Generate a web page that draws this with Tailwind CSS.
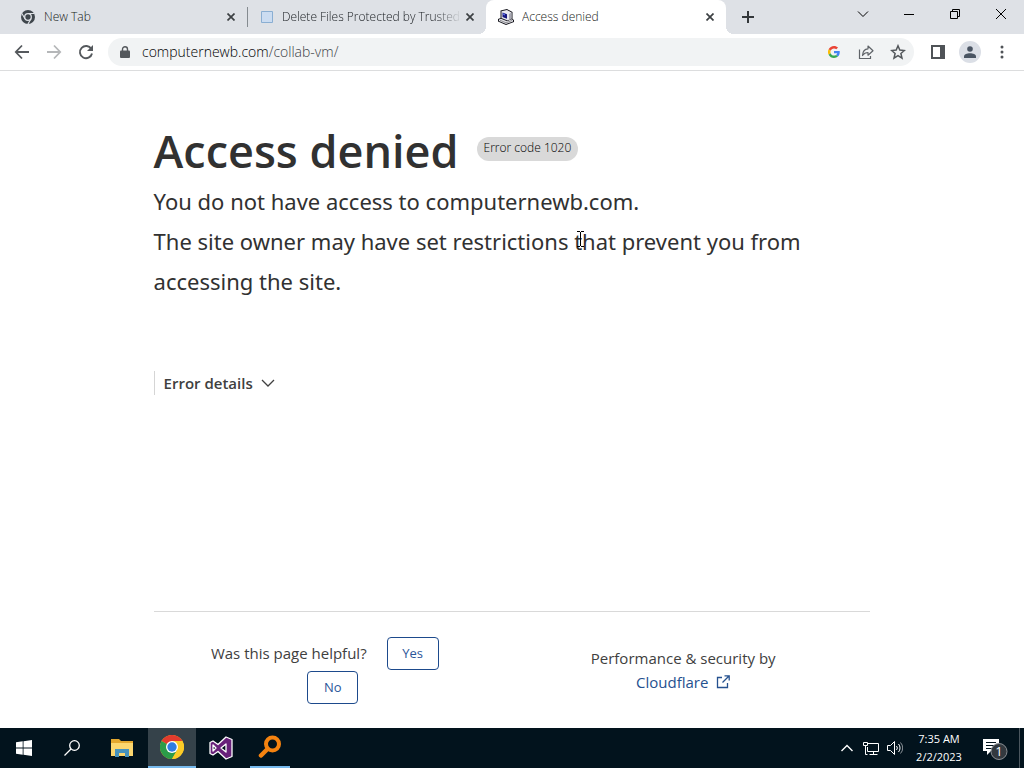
<!DOCTYPE html>
<html lang="en">
<head>
<meta charset="utf-8">
<meta name="viewport" content="width=device-width, initial-scale=1">
<title>Access denied</title>
<script src="https://cdn.jsdelivr.net/npm/@tailwindcss/browser@4"></script>
</head>
<body class="relative flex h-screen flex-col overflow-hidden bg-white font-['Open_Sans','Noto_Sans',sans-serif] text-[#313131]">

<!-- Tab strip -->
<div class="flex h-[34px] shrink-0 bg-[#dee1e6] pl-2 text-xs font-light text-[#181c20]">
  <div class="flex min-w-0 max-w-60 flex-1 items-center gap-2 pl-3">
    <svg class="size-4 shrink-0" viewBox="0 0 16 16"><circle cx="8" cy="8" r="7" fill="#3f464c"/><circle cx="8" cy="8" r="3.300" fill="#3f464c" stroke="#dee1e6" stroke-width="1.300"/><path d="M8 4.500h6.200M5 9.800L1.900 4.400M11 9.800l-3.100 5.300" stroke="#dee1e6" stroke-width="1.100"/></svg>
    <span class="flex-1 truncate">New Tab</span>
    <button class="grid size-4 shrink-0 place-items-center" aria-label="Close New Tab"><svg class="size-2" viewBox="0 0 8 8" stroke="#3c4043" stroke-width="1.700"><path d="M.5.5l7 7M7.500.5l-7 7"/></svg></button>
    <span class="h-5 w-px bg-[#858b90]"></span>
  </div>
  <div class="flex min-w-0 max-w-[238px] flex-1 items-center gap-2 pl-3 pr-2">
    <svg class="size-[14px] shrink-0" viewBox="0 0 14 14"><path d="M1.500 1.500h11v11h-11z" fill="#cbdcf1" stroke="#8aaed2"/></svg>
    <span class="flex-1 overflow-hidden whitespace-nowrap mask-r-from-85% mask-r-to-100%">Delete Files Protected by Trusted</span>
    <button class="-ml-2 grid size-4 shrink-0 place-items-center" aria-label="Close Delete Files tab"><svg class="size-2" viewBox="0 0 8 8" stroke="#3c4043" stroke-width="1.700"><path d="M.5.5l7 7M7.500.5l-7 7"/></svg></button>
  </div>
  <div class="relative flex min-w-0 max-w-60 flex-1 items-center gap-2 rounded-t-lg bg-white pl-3 pr-2">
    <span class="absolute bottom-0 -left-2 size-2 bg-[radial-gradient(circle_at_0_0,transparent_8px,white_8px)]"></span>
    <span class="absolute -right-2 bottom-0 size-2 bg-[radial-gradient(circle_at_100%_0,transparent_8px,white_8px)]"></span>
    <svg class="size-4 shrink-0" viewBox="0 0 16 16"><path d="M2.500 1.500L9 0l5.500 3v7L16 11v2l-8 3-8-3.500V10l2.500-1z" fill="#15151c"/><path d="M3.500 2.300L9 1l4.500 2.500v6L9.500 11.500l-6-2.500z" fill="#e8e8ee"/><path d="M4.500 3.500l4.500 1.700v4.600l-4.500-1.800z" fill="#15157c"/><path d="M5 4.200l2 .8v1.500l-2-.8z" fill="#5a6be8"/><path d="M11 5l2.500-1.500v6l-2.500 1.500z" fill="#a8a8b2"/><path d="M1 10.500l2-.8 6 2.600 4.500-2 1.500.9v1.300L8 15l-7-3z" fill="#e4e4ea"/><path d="M2 11.200l6 2.600 6-2.300" stroke="#555" stroke-width=".6" fill="none"/></svg>
    <span class="flex-1 truncate">Access denied</span>
    <button class="grid size-4 shrink-0 place-items-center" aria-label="Close Access denied"><svg class="size-2" viewBox="0 0 8 8" stroke="#3c4043" stroke-width="1.700"><path d="M.5.5l7 7M7.500.5l-7 7"/></svg></button>
  </div>
  <button class="grid w-11 place-items-center" aria-label="New tab"><svg class="size-3" viewBox="0 0 12 12" stroke="#33373a" stroke-width="2"><path d="M6 0v12M0 6h12"/></svg></button>
  <div class="ml-auto flex h-7 text-black">
    <button class="grid w-[46px] place-items-center" aria-label="Search tabs"><svg class="size-3" viewBox="0 0 12 12" fill="none" stroke="currentColor"><path d="M1 3.500l5 5 5-5"/></svg></button>
    <button class="grid w-[46px] place-items-center" aria-label="Minimize"><svg class="size-3" viewBox="0 0 12 12" stroke="currentColor"><path d="M1 6.500h10"/></svg></button>
    <button class="grid w-[46px] place-items-center" aria-label="Restore"><svg class="size-3" viewBox="0 0 12 12" fill="none" stroke="currentColor"><path d="M1.500 3.500h7v7h-7zM3.500 3.500v-2h7v7h-2"/></svg></button>
    <button class="grid w-[46px] place-items-center" aria-label="Close window"><svg class="size-3" viewBox="0 0 12 12" stroke="currentColor"><path d="M1 1l10 10M11 1L1 11"/></svg></button>
  </div>
</div>

<!-- Toolbar -->
<div class="flex h-[37px] shrink-0 items-center border-b border-[#dcddde] bg-white px-3">
  <div class="flex w-24 gap-3 text-[#55595d]">
    <button class="grid size-5 place-items-center" aria-label="Back"><svg class="size-4" viewBox="0 0 16 16" fill="none" stroke="currentColor" stroke-width="1.800"><path d="M15 8H2M8 1.500L1.800 8 8 14.500"/></svg></button>
    <button class="grid size-5 place-items-center text-[#b5b7b9]" aria-label="Forward"><svg class="size-4" viewBox="0 0 16 16" fill="none" stroke="currentColor" stroke-width="1.800"><path d="M1 8h13M8 1.500L14.200 8 8 14.500"/></svg></button>
    <button class="grid size-5 place-items-center" aria-label="Reload"><svg class="size-4" viewBox="0 0 16 16"><path d="M13.300 5A6.100 6.100 0 1 0 14 9.500" fill="none" stroke="currentColor" stroke-width="1.900"/><path d="M15 1v6H9z" fill="currentColor"/></svg></button>
  </div>
  <div class="flex h-7 flex-1 items-center rounded-full bg-[#f1f3f4] pl-3 pr-2">
    <svg class="mr-3 h-3 w-[10px] shrink-0" viewBox="0 0 10 12"><rect x="0" y="4.500" width="10" height="7.500" rx="1" fill="#54585c"/><path d="M2.500 5V3.200a2.500 2.500 0 0 1 5 0V5" fill="none" stroke="#54585c" stroke-width="1.400"/></svg>
    <div class="flex-1 text-sm font-light text-[#3b4045]" role="textbox" aria-label="Address"><span class="text-black">computernewb.com</span>/collab-vm/</div>
    <div class="flex gap-4">
      <button class="grid size-4 place-items-center" aria-label="Google"><svg class="size-3" viewBox="0 0 48 48"><path fill="#EA4335" d="M24 9.500c3.540 0 6.710 1.220 9.210 3.600l6.850-6.850C35.900 2.380 30.470 0 24 0 14.620 0 6.510 5.380 2.560 13.220l7.980 6.190C12.430 13.720 17.740 9.500 24 9.500z"/><path fill="#4285F4" d="M46.980 24.550c0-1.570-.15-3.090-.38-4.550H24v9.020h12.940c-.58 2.960-2.260 5.480-4.780 7.180l7.730 6c4.510-4.180 7.090-10.360 7.090-17.650z"/><path fill="#FBBC05" d="M10.530 28.590A14.500 14.500 0 0 1 10.530 19.410l-7.980-6.190A24 24 0 0 0 2.560 34.780z"/><path fill="#34A853" d="M24 48c6.480 0 11.930-2.130 15.890-5.810l-7.730-6c-2.150 1.450-4.920 2.300-8.160 2.300-6.260 0-11.570-4.220-13.470-9.910l-7.980 6.190C6.510 42.620 14.620 48 24 48z"/></svg></button>
      <button class="grid size-4 place-items-center" aria-label="Share"><svg class="size-4" viewBox="0 0 16 16" fill="none" stroke="#5f6368" stroke-width="1.200"><path d="M1.500 5.500v9h11v-2.500"/><path d="M4.500 11.500c.2-4.300 2-6.500 5.500-6.700V2l5 4.700-5 4.500V8.500c-2.500 0-4 .8-5.500 3z" stroke-linejoin="round"/></svg></button>
      <button class="grid size-4 place-items-center" aria-label="Bookmark"><svg class="size-4" viewBox="0 0 16 16" fill="none" stroke="#53575b" stroke-width="1.500"><path d="M8 1.800l1.800 4.300 4.600.4-3.500 3 1.100 4.600L8 11.700l-4 2.400 1.100-4.600-3.500-3 4.600-.4z"/></svg></button>
    </div>
  </div>
  <div class="ml-[14px] flex items-center gap-[11px]">
    <button class="grid size-5 place-items-center" aria-label="Side panel"><svg class="size-[14px]" viewBox="0 0 14 14"><path d="M1 1h12v12H1z" fill="none" stroke="#4f5357" stroke-width="2"/><path d="M9 1h4v12H9z" fill="#4f5357"/></svg></button>
    <button class="grid size-[22px] place-items-center rounded-full bg-[#dbdfe6]" aria-label="Profile"><svg class="size-3" viewBox="0 0 12 12" fill="#4a5563"><circle cx="6" cy="3" r="2.800"/><path d="M0 12v-1.500C0 8.500 3 7.300 6 7.300s6 1.200 6 3.200V12z"/></svg></button>
    <button class="grid size-5 place-items-center" aria-label="Menu"><svg class="size-[14px]" viewBox="0 0 14 14" fill="#4f5357"><circle cx="7" cy="2" r="1.500"/><circle cx="7" cy="7" r="1.500"/><circle cx="7" cy="12" r="1.500"/></svg></button>
  </div>
</div>

<!-- Page -->
<main class="mx-auto flex min-h-0 w-[70%] flex-1 flex-col pt-[50px]">
  <div class="flex items-center gap-[18px]">
    <h1 class="text-[45px] leading-[60px] font-semibold">Access denied</h1>
    <span class="mb-1 h-6 rounded-full bg-[#d9d9d9] px-[7px] text-xs leading-[22px] font-light text-black">Error code 1020</span>
  </div>
  <div class="font-['Noto_Sans','Open_Sans',sans-serif] text-[22px] leading-10">
    <p>You do not have access to computernewb.com.</p>
    <p>The site owner may have set restrictions that prevent you from accessing the site.</p>
  </div>
  <button class="mt-[70px] flex h-6 items-center gap-[7px] self-start border-l border-[#d5d5d5] pl-[9px] text-[15px] leading-6 font-semibold text-[#404040]">Error details
    <svg class="h-4 w-4" viewBox="0 0 16 16" fill="none" stroke="#404040" stroke-width="1.300"><path d="M2 5l6 6 6-6"/></svg>
  </button>
  <footer class="mt-auto flex border-t border-[#d9d9d9] pt-[25px] text-[15px] text-[#404040]">
    <div class="flex h-[91px] w-1/2 flex-wrap content-start items-center justify-center gap-y-px px-4">
      <span class="mr-5">Was this page helpful?</span>
      <button class="mr-4 h-[33px] w-[52px] rounded border border-[#1d4a8c] text-[13px] text-[#2c5699]">Yes</button>
      <div class="flex w-full justify-center"><button class="h-[33px] w-[51px] rounded border border-[#1d4a8c] text-[13px] text-[#2c5699]">No</button></div>
    </div>
    <div class="w-1/2 pt-[9px] pr-4 text-center leading-6">Performance &amp; security by<br>
      <a href="#" class="inline-flex items-center gap-2 text-[#25518f]">Cloudflare <svg class="size-[14px]" viewBox="0 0 14 14" fill="none" stroke="currentColor" stroke-width="1.300"><path d="M6 2.500H1.500v10h10V8M8.500.800h4.700v4.700M13 1L6.500 7.500"/></svg></a>
    </div>
  </footer>
</main>

<!-- Taskbar -->
<div class="flex h-10 shrink-0 bg-[#02131d] text-white">
  <button class="grid w-12 place-items-center" aria-label="Start"><svg class="size-4" viewBox="0 0 16 16" fill="#fff"><path d="M0 2.300l6.700-1v6.300H0zM7.500 1.200L16 0v7.600H7.500zM0 8.400h6.700v6.300l-6.700-1zM7.500 8.400H16V16l-8.500-1.200z"/></svg></button>
  <button class="grid w-12 place-items-center" aria-label="Search"><svg class="size-4" viewBox="0 0 16 16" fill="none" stroke="#fff" stroke-width="1.300"><circle cx="10.500" cy="5.500" r="4.800"/><path d="M7 9l-6.500 6.500"/></svg></button>
  <button class="grid w-[52px] place-items-center" aria-label="File Explorer"><svg class="h-[18px] w-[22px]" viewBox="0 0 22 18"><path d="M0 0h8l2 2h12v15H0z" fill="#e3a72e"/><path d="M0 4h22v13H0z" fill="#fbd66f"/><path d="M4 18v-8h14v8h-4v-4H8v4z" fill="#4692bd"/></svg></button>
  <button class="grid w-12 place-items-center border-b-2 border-[#76b9ed] bg-[#35424a]" aria-label="Chrome"><svg class="size-6" viewBox="0 0 24 24"><circle cx="12" cy="12" r="12" fill="#f9c51c"/><path d="M12 12L1.600 6a12 12 0 0 1 20.800 0z" fill="#e23b2e"/><path d="M1.600 6A12 12 0 0 0 12 24l5.200-9L12 12z" fill="#2b9c49"/><path d="M12 6h10.400A12 12 0 0 1 12 24l5.200-9z" fill="#fccb27"/><circle cx="12" cy="12" r="6" fill="#fff"/><circle cx="12" cy="12" r="4.700" fill="#2f7de1"/></svg></button>
  <button class="grid w-[50px] place-items-center" aria-label="Visual Studio"><svg class="size-6" viewBox="0 0 24 24"><path fill-rule="evenodd" d="M17 1l6 2.500v17L17 23l-8-7.500L4 19l-3-1.500v-11L4 5l5 3.500zM17 8l-5 4 5 4zM4 9v6l3-3z" fill="#68217a" stroke="#fff" stroke-width="1.300" stroke-linejoin="round"/></svg></button>
  <button class="ml-1 grid w-10 place-items-center border-b-2 border-[#76b9ed]" aria-label="Everything search"><svg class="size-6" viewBox="0 0 24 24" fill="none" stroke="#f58310"><circle cx="14.500" cy="9" r="6.500" stroke-width="4"/><path d="M9.500 14L3 20.500" stroke-width="4.500" stroke-linecap="round"/></svg></button>
  <div class="ml-auto flex items-center">
    <button class="grid size-6 place-items-center" aria-label="Show hidden icons"><svg class="size-3" viewBox="0 0 12 12" fill="none" stroke="#fff" stroke-width="1.400"><path d="M.5 9L6 3.500 11.500 9"/></svg></button>
    <button class="grid size-6 place-items-center" aria-label="Network"><svg class="size-4" viewBox="0 0 16 16" fill="none" stroke="#fff"><path d="M5 3.500h10.500v8H4.500V7M10.500 11.500v3M6.500 14.500h8M.5 2.500h4v3h-4zM2.500 6v8.500h2"/></svg></button>
    <button class="grid size-6 place-items-center" aria-label="Volume"><svg class="size-4" viewBox="0 0 16 16" fill="none" stroke="#fff"><path d="M.5 5.500h3l4-4v13l-4-4h-3zM9.500 6a3 3 0 0 1 0 4M11.500 4a6 6 0 0 1 0 8"/><path d="M13.500 2.500a8 8 0 0 1 0 11" stroke="#8b9298"/></svg></button>
    <div class="w-16 text-center text-[11px] leading-[18px]">7:35 AM<br>2/2/2023</div>
    <button class="ml-1 grid w-10 place-items-center" aria-label="Notifications, 1 new"><svg class="h-6 w-7" viewBox="0 0 28 24"><path d="M2 3h16v12h-8l-4 4v-4H2z" fill="#fff"/><path d="M5 6.500h10M5 9.500h10M5 12.500h7" stroke="#02131d"/><circle cx="18" cy="15.500" r="8" fill="#33393f" stroke="#8a8f94"/><text x="18" y="20" text-anchor="middle" font-size="13" fill="#fff">1</text></svg></button>
    <span class="mr-1 ml-1 h-10 w-px bg-[#4b565e]"></span>
  </div>
</div>

<!-- Mouse pointer -->
<svg class="absolute top-[229px] left-[576px] h-5 w-[9px]" viewBox="0 0 9 20" fill="none" stroke="#000"><path d="M1 2.500h3M5 2.500h3M4.500 3v14M1 17.500h3M5 17.500h3"/></svg>
</body>
</html>
